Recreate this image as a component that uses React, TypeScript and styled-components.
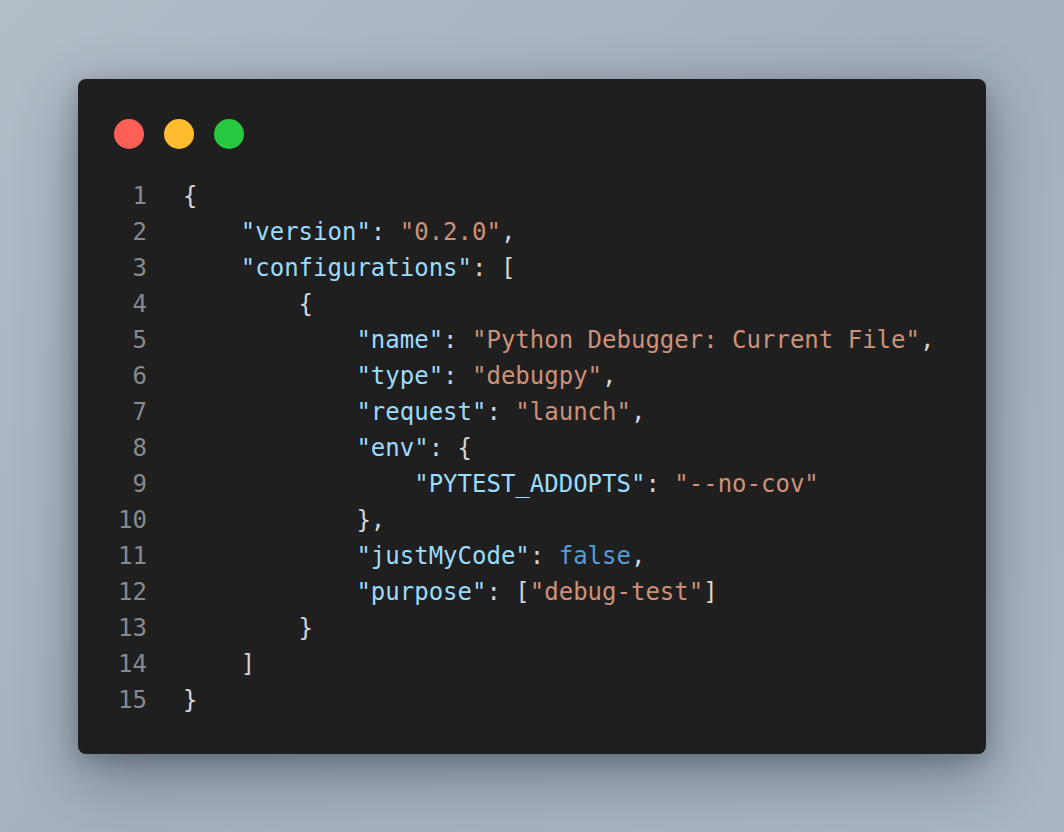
import React from "react";
import styled, { createGlobalStyle } from "styled-components";

const Global = createGlobalStyle`
  html, body { margin: 0; padding: 0; }
  body {
    width: 1064px;
    height: 832px;
    background: linear-gradient(135deg, #b3bdc8 0%, #a4b0bd 50%, #a9b5c2 100%);
    overflow: hidden;
  }
`;

const Page = styled.div`
  width: 1064px;
  height: 832px;
  display: flex;
  align-items: center;
  justify-content: center;
`;

const Card = styled.div`
  width: 908px;
  height: 675px;
  box-sizing: border-box;
  background: #1f1f1f;
  border-radius: 8px;
  box-shadow: 0 20px 60px rgba(40, 50, 62, 0.45), 0 6px 20px rgba(40, 50, 62, 0.25);
  padding: 40px 36px 36px 36px;
  display: flex;
  flex-direction: column;
  gap: 29px;
`;

const Lights = styled.div`
  display: flex;
  gap: 20px;
`;

const Light = styled.span<{ $c: string }>`
  width: 30px;
  height: 30px;
  border-radius: 50%;
  background: ${(p) => p.$c};
`;

const Code = styled.div`
  display: flex;
  flex-direction: column;
  font-family: "DejaVu Sans Mono", "Liberation Mono", monospace;
  font-size: 24px;
  line-height: 36px;
  color: #d4d4d4;
  padding-left: 4px;
`;

const Row = styled.div`
  display: flex;
  white-space: pre;
`;

const Num = styled.span`
  width: 29px;
  text-align: right;
  color: #858a90;
  margin-right: 36px;
  flex-shrink: 0;
`;

const Key = styled.span`color: #9cdcfe;`;
const Str = styled.span`color: #ce9178;`;
const Kw = styled.span`color: #569cd6;`;

const lines: React.ReactNode[] = [
  <>{"{"}</>,
  <>{"    "}<Key>"version"</Key>: <Str>"0.2.0"</Str>,</>,
  <>{"    "}<Key>"configurations"</Key>: [</>,
  <>{"        {"}</>,
  <>{"            "}<Key>"name"</Key>: <Str>"Python Debugger: Current File"</Str>,</>,
  <>{"            "}<Key>"type"</Key>: <Str>"debugpy"</Str>,</>,
  <>{"            "}<Key>"request"</Key>: <Str>"launch"</Str>,</>,
  <>{"            "}<Key>"env"</Key>: {"{"}</>,
  <>{"                "}<Key>"PYTEST_ADDOPTS"</Key>: <Str>"--no-cov"</Str></>,
  <>{"            },"}</>,
  <>{"            "}<Key>"justMyCode"</Key>: <Kw>false</Kw>,</>,
  <>{"            "}<Key>"purpose"</Key>: [<Str>"debug-test"</Str>]</>,
  <>{"        }"}</>,
  <>{"    ]"}</>,
  <>{"}"}</>,
];

export default function App() {
  return (
    <>
      <Global />
      <Page>
        <Card>
          <Lights>
            <Light $c="#ff5f57" />
            <Light $c="#febc2e" />
            <Light $c="#28c840" />
          </Lights>
          <Code>
            {lines.map((l, i) => (
              <Row key={i}>
                <Num>{i + 1}</Num>
                <span>{l}</span>
              </Row>
            ))}
          </Code>
        </Card>
      </Page>
    </>
  );
}
